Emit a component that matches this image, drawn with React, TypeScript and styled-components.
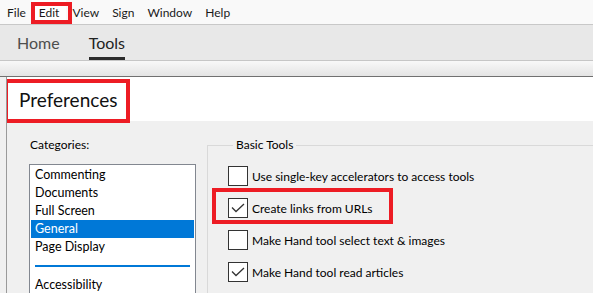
import React from "react";
import styled, { createGlobalStyle } from "styled-components";

const GlobalStyle = createGlobalStyle`
  html, body {
    margin: 0;
    padding: 0;
    background: #f0f0f0;
    overflow: hidden;
  }
  body {
    font-family: Lato, "Noto Sans", sans-serif;
    color: #000;
  }
`;

const menuItems = ["File", "Edit", "View", "Sign", "Window", "Help"];
const categories = ["Commenting", "Documents", "Full Screen", "General", "Page Display"];
const options = [
  { label: "Use single-key accelerators to access tools", checked: false },
  { label: "Create links from URLs", checked: true, marked: true },
  { label: "Make Hand tool select text & images", checked: false },
  { label: "Make Hand tool read articles", checked: true },
];

const CheckMark = () => (
  <svg width="14" height="10" viewBox="0 0 14 10">
    <path d="M1 4.5 L5 8.5 L13 1" fill="none" stroke="#333" strokeWidth="1.3" />
  </svg>
);

const SearchPeek = () => (
  <svg width="12" height="12" viewBox="0 0 12 12">
    <circle cx="6" cy="6" r="4.5" fill="none" stroke="#555" strokeWidth="1.4" />
  </svg>
);

const App = () => {
  return (
    <Page>
      <GlobalStyle />
      <MenuBar>
        {menuItems.map((item) => (
          <MenuItem key={item} $marked={item === "Edit"}>
            {item}
          </MenuItem>
        ))}
      </MenuBar>
      <TabBar>
        <Tab>Home</Tab>
        <Tab $active>Tools</Tab>
      </TabBar>
      <ToolStrip>
        <SearchSlot>
          <SearchPeek />
        </SearchSlot>
      </ToolStrip>
      <Dialog>
        <TitleArea>
          <Title>Preferences</Title>
        </TitleArea>
        <Body>
          <LeftPanel>
            <Label>Categories:</Label>
            <List>
              {categories.map((c) => (
                <ListItem key={c} $selected={c === "General"}>
                  {c}
                </ListItem>
              ))}
              <Separator />
              <ListItem>Accessibility</ListItem>
            </List>
          </LeftPanel>
          <Group>
            <Legend>Basic Tools</Legend>
            {options.map((o) => (
              <OptionRow key={o.label} $marked={o.marked}>
                <Box>{o.checked && <CheckMark />}</Box>
                <OptionText>{o.label}</OptionText>
              </OptionRow>
            ))}
          </Group>
        </Body>
      </Dialog>
    </Page>
  );
};

const Page = styled.div`
  width: 593px;
  height: 293px;
  overflow: hidden;
  display: flex;
  flex-direction: column;
`;

const MenuBar = styled.div`
  flex-shrink: 0;
  display: flex;
  height: 24px;
  padding-left: 0.5px;
  background: #f9f9f9;
  border-bottom: 1px solid #c8c8c8;
  font-size: 12px;
`;

const MenuItem = styled.div<{ $marked?: boolean }>`
  position: relative;
  display: flex;
  align-items: center;
  padding: 0 6.5px;
  color: #1a1a1a;
  background: ${(p) => (p.$marked ? "#fff" : "transparent")};

  ${(p) =>
    p.$marked &&
    `
    &::after {
      content: "";
      position: absolute;
      left: -1px;
      right: -6px;
      top: 2px;
      bottom: 0;
      border: 4px solid #ed1c24;
    }
  `}
`;

const TabBar = styled.div`
  flex-shrink: 0;
  display: flex;
  gap: 29px;
  height: 35px;
  padding-left: 17px;
  background: #e8e8e8;
  border-bottom: 1px solid #c6c6c6;
`;

const Tab = styled.div<{ $active?: boolean }>`
  display: flex;
  align-items: center;
  box-sizing: border-box;
  padding-top: 3px;
  font-size: 16px;
  color: ${(p) => (p.$active ? "#222" : "#4e4e4e")};
  border-bottom: 3px solid ${(p) => (p.$active ? "#2b2b2b" : "transparent")};
`;

const ToolStrip = styled.div`
  flex-shrink: 0;
  height: 15px;
  background: linear-gradient(#f8f8f8, #e4e4e4);
  border-bottom: 1px solid #707070;
  overflow: hidden;
  padding-left: 16px;
`;

const SearchSlot = styled.div`
  margin-top: 11px;
`;

const Dialog = styled.div`
  flex: 1;
  min-height: 0;
  overflow: hidden;
  margin-left: 6px;
  border-left: 1px solid #9a9a9a;
  background: #f0f0f0;
  display: flex;
  flex-direction: column;
`;

const TitleArea = styled.div`
  flex-shrink: 0;
  height: 44px;
  background: #fff;
  display: flex;
  align-items: center;
  padding-left: 12px;
`;

const Title = styled.div`
  position: relative;
  font-size: 19px;
  line-height: 23px;
  color: #111;

  &::after {
    content: "";
    position: absolute;
    left: -15px;
    right: -13px;
    top: -9px;
    bottom: -12px;
    border: 4px solid #ed1c24;
  }
`;

const Body = styled.div`
  display: flex;
  flex-shrink: 0;
`;

const LeftPanel = styled.div`
  flex-shrink: 0;
  width: 178px;
  padding: 17px 0 0 22px;
  font-size: 12.5px;
`;

const Label = styled.div`
  margin-left: 1px;
  height: 26px;
  line-height: 14px;
  font-size: 12px;
`;

const List = styled.div`
  width: 167px;
  height: 200px;
  background: #fff;
  border: 1px solid #828790;
  padding: 1px;
  box-sizing: border-box;
`;

const ListItem = styled.div<{ $selected?: boolean }>`
  height: 18px;
  line-height: 18px;
  padding-left: 4px;
  background: ${(p) => (p.$selected ? "#0078d7" : "transparent")};
  color: ${(p) => (p.$selected ? "#fff" : "#000")};
`;

const Separator = styled.div`
  height: 1px;
  margin: 9px 4px 9px 4px;
  background: #0078d7;
  border-top: 0.5px solid #0078d7;
`;

const Group = styled.fieldset`
  flex: 1;
  margin: 17px 0 0 0;
  padding: 8px 0 0 20px;
  border: 1px solid #d9d9d9;
  border-right: none;
  border-bottom: none;
  font-size: 12px;
`;

const Legend = styled.legend`
  margin-left: 5px;
  padding: 0 3px;
  line-height: 14px;
`;

const OptionRow = styled.div<{ $marked?: boolean }>`
  position: relative;
  display: flex;
  align-items: center;
  gap: 4px;
  height: 32px;

  ${(p) =>
    p.$marked &&
    `
    &::after {
      content: "";
      position: absolute;
      left: -16px;
      width: 181px;
      top: -4px;
      bottom: 0;
      box-sizing: border-box;
      border: 4px solid #ed1c24;
    }
  `}
`;

const Box = styled.div`
  width: 20px;
  height: 20px;
  box-sizing: border-box;
  border: 1px solid #333;
  background: #fff;
  display: flex;
  align-items: flex-end;
  justify-content: center;
  padding-bottom: 4px;
`;

const OptionText = styled.span`
  color: #000;
`;

export default App;
